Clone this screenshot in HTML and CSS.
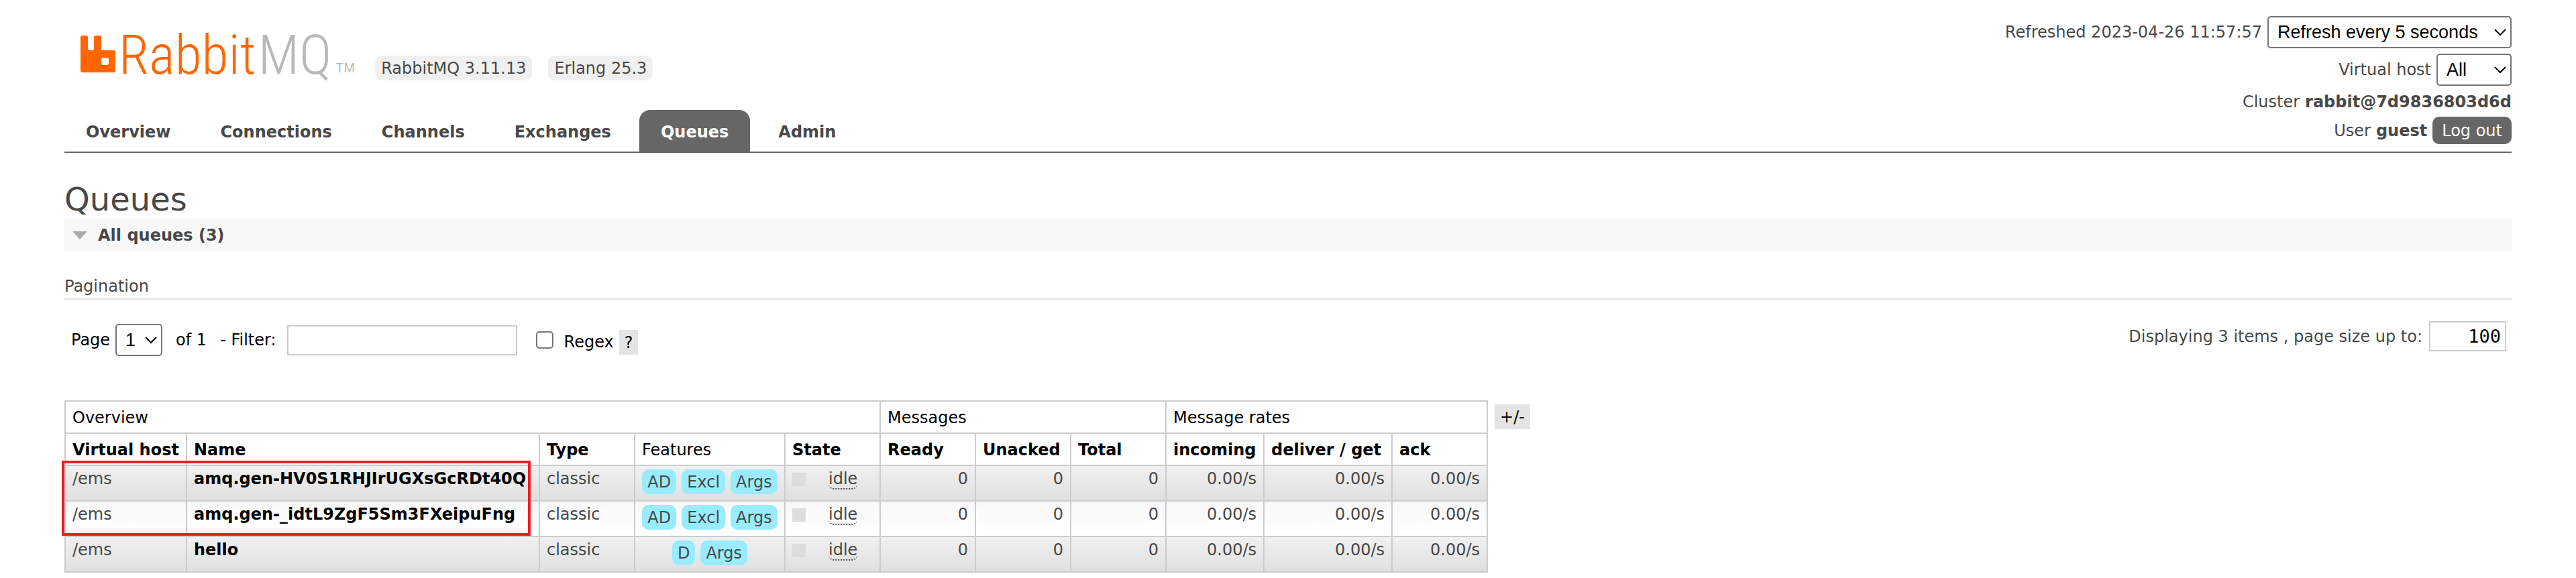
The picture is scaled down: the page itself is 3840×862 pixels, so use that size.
FILE: index.html
```html
<!DOCTYPE html>
<html lang="en">
<head>
<meta charset="utf-8">
<title>RabbitMQ Management</title>
<link rel="stylesheet" href="styles.css">
</head>
<body>
<header class="header">
  <div class="header-left">
    <div class="brand-row">
      <a class="logo" href="#" aria-label="RabbitMQ">
        <svg class="logo-mark" viewBox="0 0 52 55" aria-hidden="true">
          <path fill="#ff6600" fill-rule="evenodd" d="M3 0H8Q11 0 11 3V19Q11 22 14 22H17Q20 22 20 19V3Q20 0 23 0H28Q31 0 31 3V19Q31 22 34 22H49Q52 22 52 25V52Q52 55 49 55H3Q0 55 0 52V3Q0 0 3 0ZM34 33Q31 33 31 36V41Q31 44 34 44H39Q42 44 42 41V36Q42 33 39 33Z"/>
        </svg>
        <span class="logo-text">Rabbit<span class="logo-mq">MQ</span></span><span class="logo-tm">TM</span>
      </a>
      <span class="version">RabbitMQ 3.11.13</span>
      <span class="version">Erlang 25.3</span>
    </div>
    <nav class="tabs">
      <a class="tab" href="#">Overview</a>
      <a class="tab" href="#">Connections</a>
      <a class="tab" href="#">Channels</a>
      <a class="tab" href="#">Exchanges</a>
      <a class="tab tab-selected" href="#">Queues</a>
      <a class="tab" href="#">Admin</a>
    </nav>
  </div>
  <div class="status">
    <div class="status-row">
      <label for="refresh">Refreshed 2023-04-26 11:57:57</label>
      <span class="select select-refresh">
        <select id="refresh"><option>Refresh every 5 seconds</option></select>
        <svg class="chevron" viewBox="0 0 18 11" aria-hidden="true"><path d="M1 1L9 9L17 1"/></svg>
      </span>
    </div>
    <div class="status-row">
      <label for="vhost">Virtual host</label>
      <span class="select select-vhost">
        <select id="vhost"><option>All</option></select>
        <svg class="chevron" viewBox="0 0 18 11" aria-hidden="true"><path d="M1 1L9 9L17 1"/></svg>
      </span>
    </div>
    <div class="status-row">Cluster <b>rabbit@7d9836803d6d</b></div>
    <div class="status-row">User <b>guest</b> <button class="logout" type="button">Log out</button></div>
  </div>
</header>

<main class="main">
  <h1 class="title">Queues</h1>
  <h2 class="section">
    <svg class="triangle" viewBox="0 0 22 12" aria-hidden="true"><path fill="#aaa" d="M0 0H22L11 12Z"/></svg>
    All queues (3)
  </h2>
  <h3 class="subhead">Pagination</h3>

  <div class="filters">
    <div class="filters-left">
      <label for="page">Page</label>
      <span class="select select-page">
        <select id="page"><option>1</option></select>
        <svg class="chevron" viewBox="0 0 18 11" aria-hidden="true"><path d="M1 1L9 9L17 1"/></svg>
      </span>
      <span class="of">of 1</span>
      <label for="filter">- Filter:</label>
      <input class="text filter-input" id="filter" type="text">
      <span class="regex">
        <input class="check" id="regex" type="checkbox">
        <label for="regex">Regex</label>
        <button class="help" type="button">?</button>
      </span>
    </div>
    <div class="filters-right">
      <label for="size">Displaying 3 items , page size up to:</label>
      <input class="text size-input" id="size" type="text" value="100">
    </div>
  </div>

  <div class="queues">
    <div class="table-box">
      <table class="list">
        <colgroup>
          <col class="c-vhost"><col class="c-name"><col class="c-std"><col class="c-feat"><col class="c-std">
          <col class="c-std"><col class="c-std"><col class="c-std"><col class="c-in"><col class="c-del"><col class="c-std">
        </colgroup>
        <thead>
          <tr><th class="plain" colspan="5">Overview</th><th class="plain" colspan="3">Messages</th><th class="plain" colspan="3">Message rates</th></tr>
          <tr><th>Virtual host</th><th>Name</th><th>Type</th><th class="plain">Features</th><th>State</th><th>Ready</th><th>Unacked</th><th>Total</th><th>incoming</th><th>deliver / get</th><th>ack</th></tr>
        </thead>
        <tbody>
          <tr>
            <td>/ems</td><td><a class="queue" href="#">amq.gen-HV0S1RHJIrUGXsGcRDt40Q</a></td><td>classic</td>
            <td><div class="tags"><span class="tag">AD</span><span class="tag">Excl</span><span class="tag">Args</span></div></td>
            <td><div class="state"><span class="dot"></span><span class="idle">idle</span></div></td>
            <td class="num">0</td><td class="num">0</td><td class="num">0</td><td class="num">0.00/s</td><td class="num">0.00/s</td><td class="num">0.00/s</td>
          </tr>
          <tr>
            <td>/ems</td><td><a class="queue" href="#">amq.gen-_idtL9ZgF5Sm3FXeipuFng</a></td><td>classic</td>
            <td><div class="tags"><span class="tag">AD</span><span class="tag">Excl</span><span class="tag">Args</span></div></td>
            <td><div class="state"><span class="dot"></span><span class="idle">idle</span></div></td>
            <td class="num">0</td><td class="num">0</td><td class="num">0</td><td class="num">0.00/s</td><td class="num">0.00/s</td><td class="num">0.00/s</td>
          </tr>
          <tr>
            <td>/ems</td><td><a class="queue" href="#">hello</a></td><td>classic</td>
            <td><div class="tags"><span class="tag">D</span><span class="tag">Args</span></div></td>
            <td><div class="state"><span class="dot"></span><span class="idle">idle</span></div></td>
            <td class="num">0</td><td class="num">0</td><td class="num">0</td><td class="num">0.00/s</td><td class="num">0.00/s</td><td class="num">0.00/s</td>
          </tr>
        </tbody>
      </table>
      <div class="highlight"></div>
    </div>
    <button class="help columns" type="button">+/-</button>
  </div>
</main>
</body>
</html>
```
FILE: styles.css
```css
* { box-sizing: border-box; }

body {
  margin: 0;
  padding: 0 96px;
  background: #fff;
  color: #484848;
  font: 24px/28px Verdana, "DejaVu Sans", sans-serif;
}

a { color: inherit; text-decoration: none; }
button, input, select { margin: 0; font: inherit; }

/* Header */
.header {
  display: flex;
  justify-content: space-between;
  border-bottom: 2px solid #666;
}
.header-left {
  display: flex;
  flex-direction: column;
  justify-content: space-between;
}
.brand-row {
  display: flex;
  align-items: flex-end;
  gap: 24px;
  padding: 40px 0 0 24px;
}
.logo {
  display: flex;
  align-items: flex-end;
  height: 80px;
  padding-bottom: 12px;
  margin-right: 6px;
}
.logo-mark { width: 52px; height: 55px; margin-right: 5px; }
.logo-text {
  color: #f60;
  font: 300 82px/52px "Roboto Condensed", "Liberation Sans Narrow", "Arial Narrow", sans-serif;
}
.logo-mq { margin-left: 3px; color: #b8b8b8; }
.logo-tm {
  margin-left: 6px;
  color: #b8b8b8;
  font: 20px/14px "Liberation Sans", Arial, sans-serif;
}
.version {
  padding: 5px 9px 4px;
  border-radius: 10px;
  background: #f0f0f0;
}
.tabs { display: flex; gap: 10px; }
.tab {
  padding: 19px 32px 15px;
  border-radius: 16px 16px 0 0;
  font-weight: bold;
}
.tab-selected { background: #666; color: #fff; }

.status {
  display: flex;
  flex-direction: column;
  align-items: flex-end;
  padding: 24px 0 11px;
}
.status-row {
  display: flex;
  align-items: center;
  gap: 8px;
  margin-bottom: 8px;
}
.status-row:nth-child(2) { margin-bottom: 10px; }
.status-row:last-child { margin-bottom: 0; }
.logout {
  padding: 7px 14px 6px;
  border: 0;
  border-radius: 10px;
  background: #666;
  color: #fff;
}

/* Form controls */
.select { display: inline-grid; align-items: center; }
.select select {
  grid-area: 1 / 1;
  width: 100%;
  height: 48px;
  padding: 0 13px;
  border: 2px solid #767676;
  border-radius: 5px;
  appearance: none;
  background: #fff;
  color: #000;
  font: 27px "Liberation Sans", Arial, sans-serif;
}
.chevron {
  grid-area: 1 / 1;
  justify-self: end;
  width: 18px;
  height: 11px;
  margin-right: 8px;
  fill: none;
  stroke: #000;
  stroke-width: 2;
  pointer-events: none;
}
.select-refresh { width: 364px; }
.select-vhost { width: 112px; }
.select-page { width: 70px; }

.text {
  height: 45px;
  padding: 6px;
  border: 2px solid #ccc;
  background: #fff;
  color: #000;
}
.check {
  width: 26px;
  height: 26px;
  border: 2px solid #767676;
  border-radius: 5px;
  appearance: none;
  background: #fff;
}
.help {
  padding: 5px 8px 4px;
  border: 0;
  background: #e4e4e4;
  color: #000;
}

/* Page */
.title {
  margin: 40px 0 0;
  font-size: 48px;
  font-weight: normal;
  line-height: 58px;
}
.section {
  display: flex;
  align-items: center;
  gap: 16px;
  margin: 0;
  padding: 11px 12px 10px;
  background: #f8f8f8;
  font-size: 24px;
  line-height: 28px;
}
.triangle { width: 22px; height: 12px; }
.subhead {
  margin: 24px 0 0;
  padding: 14px 0 4px;
  border-bottom: 2px solid #e0e0e0;
  font-size: 24px;
  font-weight: normal;
}

.filters {
  display: flex;
  justify-content: space-between;
  align-items: flex-start;
  padding: 32px 8px 0 10px;
}
.filters-left, .filters-right { display: flex; align-items: center; gap: 10px; }
.filters-left { gap: 8px; padding-top: 4px; color: #000; }
.of { margin: 0 12px; }
.filter-input { width: 343px; margin-left: 8px; }
.regex { display: flex; align-items: center; gap: 8px; margin-left: 20px; padding-top: 6px; }
.check { margin: 0 8px 6px 0; }
.size-input {
  width: 115px;
  font: 27px "DejaVu Sans Mono", monospace;
  text-align: right;
}

/* Queue list */
.queues {
  display: flex;
  align-items: flex-start;
  gap: 10px;
  margin-top: 66px;
}
.table-box { position: relative; }
.list {
  width: 2122px;
  border-collapse: collapse;
  table-layout: fixed;
}
.c-vhost { width: 181px; }
.c-name { width: 526px; }
.c-std { width: 142px; }
.c-feat { width: 224px; }
.c-in { width: 146px; }
.c-del { width: 191px; }
.list th, .list td {
  border: 2px solid #ccc;
  text-align: left;
  white-space: nowrap;
}
.list th { padding: 10px 10px 8px; color: #000; }
.list .plain { font-weight: normal; }
.list td {
  height: 53px;
  padding: 5px 10px 4px;
  vertical-align: top;
}
.list tbody tr:nth-child(odd) td { background: linear-gradient(#f0f0f0, #e0e0e0); }
.list tbody tr:nth-child(even) td { background: linear-gradient(#f8f8f8, #fff); }
.list .num { text-align: right; }
.queue { color: #000; font-weight: bold; }
.tags { display: flex; justify-content: center; gap: 8px; }
.tag {
  padding: 5px 8px 4px;
  border-radius: 10px;
  background: #99ebff;
}
.state { display: flex; align-items: flex-start; gap: 34px; }
.dot { width: 20px; height: 20px; margin-top: 5px; background: #ddd; }
.idle {
  border-bottom: 2px dotted #484848;
  border-radius: 8px;
}
.highlight {
  position: absolute;
  top: 90px;
  left: -4px;
  width: 699px;
  height: 112px;
  border: 4px solid #ed1c24;
}
.columns { margin-top: 6px; }
```
